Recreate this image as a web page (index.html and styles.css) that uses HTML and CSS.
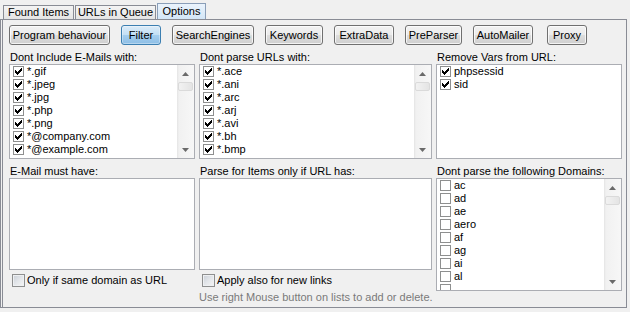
FILE: index.html
```html
<!DOCTYPE html>
<html>
<head>
<meta charset="utf-8">
<link rel="stylesheet" href="styles.css">
</head>
<body>
<div class="tabs">
  <div class="tab t-found">Found Items</div>
  <div class="tab t-urls">URLs in Queue</div>
  <div class="tab t-opt active">Options</div>
</div>
<div class="panel">
  <div class="btnrow">
    <div class="btn b-prog">Program behaviour</div>
    <div class="btn b-filter on">Filter</div>
    <div class="btn b-se">SearchEngines</div>
    <div class="btn b-kw">Keywords</div>
    <div class="btn b-ed">ExtraData</div>
    <div class="btn b-pp">PreParser</div>
    <div class="btn b-am">AutoMailer</div>
    <div class="btn b-px">Proxy</div>
  </div>

  <div class="grid top">
    <div class="group">
      <div class="lbl">Dont Include E-Mails with:</div>
      <div class="list">
        <div class="items">
          <div class="item"><span class="cb"><svg width="9" height="9" viewBox="0 0 9 9"><polygon class="ck" points="1,3 2,3 2,4 3,4 3,5 4,5 4,4 5,4 5,3 6,3 6,2 7,2 7,1 8,1 8,4 7,4 7,5 6,5 6,6 5,6 5,7 4,7 4,8 3,8 3,7 2,7 2,6 1,6"/></svg></span>*.gif</div>
          <div class="item"><span class="cb"><svg width="9" height="9" viewBox="0 0 9 9"><polygon class="ck" points="1,3 2,3 2,4 3,4 3,5 4,5 4,4 5,4 5,3 6,3 6,2 7,2 7,1 8,1 8,4 7,4 7,5 6,5 6,6 5,6 5,7 4,7 4,8 3,8 3,7 2,7 2,6 1,6"/></svg></span>*.jpeg</div>
          <div class="item"><span class="cb"><svg width="9" height="9" viewBox="0 0 9 9"><polygon class="ck" points="1,3 2,3 2,4 3,4 3,5 4,5 4,4 5,4 5,3 6,3 6,2 7,2 7,1 8,1 8,4 7,4 7,5 6,5 6,6 5,6 5,7 4,7 4,8 3,8 3,7 2,7 2,6 1,6"/></svg></span>*.jpg</div>
          <div class="item"><span class="cb"><svg width="9" height="9" viewBox="0 0 9 9"><polygon class="ck" points="1,3 2,3 2,4 3,4 3,5 4,5 4,4 5,4 5,3 6,3 6,2 7,2 7,1 8,1 8,4 7,4 7,5 6,5 6,6 5,6 5,7 4,7 4,8 3,8 3,7 2,7 2,6 1,6"/></svg></span>*.php</div>
          <div class="item"><span class="cb"><svg width="9" height="9" viewBox="0 0 9 9"><polygon class="ck" points="1,3 2,3 2,4 3,4 3,5 4,5 4,4 5,4 5,3 6,3 6,2 7,2 7,1 8,1 8,4 7,4 7,5 6,5 6,6 5,6 5,7 4,7 4,8 3,8 3,7 2,7 2,6 1,6"/></svg></span>*.png</div>
          <div class="item"><span class="cb"><svg width="9" height="9" viewBox="0 0 9 9"><polygon class="ck" points="1,3 2,3 2,4 3,4 3,5 4,5 4,4 5,4 5,3 6,3 6,2 7,2 7,1 8,1 8,4 7,4 7,5 6,5 6,6 5,6 5,7 4,7 4,8 3,8 3,7 2,7 2,6 1,6"/></svg></span>*@company.com</div>
          <div class="item"><span class="cb"><svg width="9" height="9" viewBox="0 0 9 9"><polygon class="ck" points="1,3 2,3 2,4 3,4 3,5 4,5 4,4 5,4 5,3 6,3 6,2 7,2 7,1 8,1 8,4 7,4 7,5 6,5 6,6 5,6 5,7 4,7 4,8 3,8 3,7 2,7 2,6 1,6"/></svg></span>*@example.com</div>
        </div>
        <div class="sb">
          <div class="sb-btn"><svg width="7" height="4" viewBox="0 0 7 4"><polygon class="arr" points="0,4 3.5,0 7,4"/></svg></div>
          <div class="thumb"></div>
          <div class="track"></div>
          <div class="sb-btn"><svg width="7" height="4" viewBox="0 0 7 4"><polygon class="arr" points="0,0 7,0 3.5,4"/></svg></div>
        </div>
      </div>
    </div>

    <div class="group">
      <div class="lbl">Dont parse URLs with:</div>
      <div class="list">
        <div class="items">
          <div class="item"><span class="cb"><svg width="9" height="9" viewBox="0 0 9 9"><polygon class="ck" points="1,3 2,3 2,4 3,4 3,5 4,5 4,4 5,4 5,3 6,3 6,2 7,2 7,1 8,1 8,4 7,4 7,5 6,5 6,6 5,6 5,7 4,7 4,8 3,8 3,7 2,7 2,6 1,6"/></svg></span>*.ace</div>
          <div class="item"><span class="cb"><svg width="9" height="9" viewBox="0 0 9 9"><polygon class="ck" points="1,3 2,3 2,4 3,4 3,5 4,5 4,4 5,4 5,3 6,3 6,2 7,2 7,1 8,1 8,4 7,4 7,5 6,5 6,6 5,6 5,7 4,7 4,8 3,8 3,7 2,7 2,6 1,6"/></svg></span>*.ani</div>
          <div class="item"><span class="cb"><svg width="9" height="9" viewBox="0 0 9 9"><polygon class="ck" points="1,3 2,3 2,4 3,4 3,5 4,5 4,4 5,4 5,3 6,3 6,2 7,2 7,1 8,1 8,4 7,4 7,5 6,5 6,6 5,6 5,7 4,7 4,8 3,8 3,7 2,7 2,6 1,6"/></svg></span>*.arc</div>
          <div class="item"><span class="cb"><svg width="9" height="9" viewBox="0 0 9 9"><polygon class="ck" points="1,3 2,3 2,4 3,4 3,5 4,5 4,4 5,4 5,3 6,3 6,2 7,2 7,1 8,1 8,4 7,4 7,5 6,5 6,6 5,6 5,7 4,7 4,8 3,8 3,7 2,7 2,6 1,6"/></svg></span>*.arj</div>
          <div class="item"><span class="cb"><svg width="9" height="9" viewBox="0 0 9 9"><polygon class="ck" points="1,3 2,3 2,4 3,4 3,5 4,5 4,4 5,4 5,3 6,3 6,2 7,2 7,1 8,1 8,4 7,4 7,5 6,5 6,6 5,6 5,7 4,7 4,8 3,8 3,7 2,7 2,6 1,6"/></svg></span>*.avi</div>
          <div class="item"><span class="cb"><svg width="9" height="9" viewBox="0 0 9 9"><polygon class="ck" points="1,3 2,3 2,4 3,4 3,5 4,5 4,4 5,4 5,3 6,3 6,2 7,2 7,1 8,1 8,4 7,4 7,5 6,5 6,6 5,6 5,7 4,7 4,8 3,8 3,7 2,7 2,6 1,6"/></svg></span>*.bh</div>
          <div class="item"><span class="cb"><svg width="9" height="9" viewBox="0 0 9 9"><polygon class="ck" points="1,3 2,3 2,4 3,4 3,5 4,5 4,4 5,4 5,3 6,3 6,2 7,2 7,1 8,1 8,4 7,4 7,5 6,5 6,6 5,6 5,7 4,7 4,8 3,8 3,7 2,7 2,6 1,6"/></svg></span>*.bmp</div>
        </div>
        <div class="sb">
          <div class="sb-btn"><svg width="7" height="4" viewBox="0 0 7 4"><polygon class="arr" points="0,4 3.5,0 7,4"/></svg></div>
          <div class="thumb"></div>
          <div class="track"></div>
          <div class="sb-btn"><svg width="7" height="4" viewBox="0 0 7 4"><polygon class="arr" points="0,0 7,0 3.5,4"/></svg></div>
        </div>
      </div>
    </div>

    <div class="group">
      <div class="lbl">Remove Vars from URL:</div>
      <div class="list">
        <div class="items">
          <div class="item"><span class="cb"><svg width="9" height="9" viewBox="0 0 9 9"><polygon class="ck" points="1,3 2,3 2,4 3,4 3,5 4,5 4,4 5,4 5,3 6,3 6,2 7,2 7,1 8,1 8,4 7,4 7,5 6,5 6,6 5,6 5,7 4,7 4,8 3,8 3,7 2,7 2,6 1,6"/></svg></span>phpsessid</div>
          <div class="item"><span class="cb"><svg width="9" height="9" viewBox="0 0 9 9"><polygon class="ck" points="1,3 2,3 2,4 3,4 3,5 4,5 4,4 5,4 5,3 6,3 6,2 7,2 7,1 8,1 8,4 7,4 7,5 6,5 6,6 5,6 5,7 4,7 4,8 3,8 3,7 2,7 2,6 1,6"/></svg></span>sid</div>
        </div>
      </div>
    </div>
  </div>

  <div class="grid bottom">
    <div class="group">
      <div class="lbl">E-Mail must have:</div>
      <div class="box"></div>
      <div class="chk"><span class="cb3d"></span>Only if same domain as URL</div>
    </div>
    <div class="group">
      <div class="lbl">Parse for Items only if URL has:</div>
      <div class="box"></div>
      <div class="chk"><span class="cb3d"></span>Apply also for new links</div>
      <div class="hint">Use right Mouse button on lists to add or delete.</div>
    </div>
    <div class="group">
      <div class="lbl">Dont parse the following Domains:</div>
      <div class="list tall">
        <div class="items">
          <div class="item"><span class="cb"></span>ac</div>
          <div class="item"><span class="cb"></span>ad</div>
          <div class="item"><span class="cb"></span>ae</div>
          <div class="item"><span class="cb"></span>aero</div>
          <div class="item"><span class="cb"></span>af</div>
          <div class="item"><span class="cb"></span>ag</div>
          <div class="item"><span class="cb"></span>ai</div>
          <div class="item"><span class="cb"></span>al</div>
          <div class="item"><span class="cb"></span></div>
        </div>
        <div class="sb">
          <div class="sb-btn"><svg width="7" height="4" viewBox="0 0 7 4"><polygon class="arr" points="0,4 3.5,0 7,4"/></svg></div>
          <div class="thumb"></div>
          <div class="track"></div>
          <div class="sb-btn"><svg width="7" height="4" viewBox="0 0 7 4"><polygon class="arr" points="0,0 7,0 3.5,4"/></svg></div>
        </div>
      </div>
    </div>
  </div>
</div>
</body>
</html>
```

FILE: styles.css
```css
html, body {
  margin: 0;
  padding: 0;
}
body {
  width: 630px;
  height: 312px;
  overflow: hidden;
  background: #f0f0f0;
  color: #000;
  font-family: "Liberation Sans", Arial, sans-serif;
  font-size: 11px;
  line-height: 13px;
}

/* tabs */
.tabs {
  display: flex;
  align-items: flex-end;
  height: 19px;
  padding-left: 3px;
  gap: 1px;
}
.tab {
  box-sizing: border-box;
  height: 14px;
  border: 1px solid #898c95;
  border-bottom: none;
  background: linear-gradient(#f4f4f4, #e4e4e4);
  text-align: center;
  line-height: 13px;
  white-space: nowrap;
}
.t-found { width: 71px; }
.t-urls { width: 81px; }
.t-opt { width: 49px; }
.tab.active {
  height: 16px;
  line-height: 15px;
  border-color: #8a9eb8;
  background: linear-gradient(#eaf3fc, #d3e6f7);
}

/* panel */
.panel {
  box-sizing: border-box;
  width: 627px;
  height: 289px;
  border: 1px solid #898c95;
  border-left: 3px double #898c95;
  padding: 5px 0 0 6px;
  background: #f0f0f0;
}

/* buttons */
.btnrow {
  display: flex;
  gap: 11px;
  height: 20px;
}
.btn {
  box-sizing: border-box;
  height: 20px;
  border: 1px solid #707070;
  border-radius: 3px;
  background: linear-gradient(#f3f3f3 0%, #ebebeb 48%, #dddddd 52%, #cfcfcf 100%);
  box-shadow: inset 0 0 0 1px rgba(255, 255, 255, 0.75);
  text-align: center;
  line-height: 18px;
  white-space: nowrap;
}
.btn.on {
  border-color: #3c7fb1;
  background: linear-gradient(#dcecf9 0%, #c3dff4 48%, #a3cdee 52%, #8ebfe6 100%);
  box-shadow: inset 0 0 0 1px rgba(255, 255, 255, 0.35);
}
.b-prog { width: 101px; }
.b-filter { width: 40px; }
.b-se { width: 82px; }
.b-kw { width: 58px; }
.b-ed { width: 60px; }
.b-pp { width: 57px; }
.b-am { width: 60px; }
.b-px { width: 40px; margin-left: 3px; }

/* grids */
.grid {
  display: grid;
  grid-template-columns: 186px 233px 186px;
  column-gap: 4px;
}
.grid.top { margin-top: 6px; }
.grid.bottom { margin-top: 6px; }

.group {
  display: flex;
  flex-direction: column;
}
.lbl {
  height: 13px;
  line-height: 13px;
  padding-left: 1px;
  white-space: nowrap;
}

.list {
  box-sizing: border-box;
  height: 95px;
  border: 1px solid #abadb3;
  background: #fff;
  display: flex;
  overflow: hidden;
}
.list.tall { height: 113px; }
.items {
  flex: 1;
  overflow: hidden;
}
.item {
  display: flex;
  align-items: center;
  height: 13px;
  padding-left: 3px;
  white-space: nowrap;
}
.cb {
  box-sizing: border-box;
  flex: none;
  width: 11px;
  height: 11px;
  border: 1px solid #8e8f8f;
  background: #fff;
  margin-right: 3px;
}
.cb svg {
  display: block;
}
.ck {
  fill: #000;
  shape-rendering: crispEdges;
}

/* scrollbar */
.sb {
  flex: none;
  width: 17px;
  display: flex;
  flex-direction: column;
  background: linear-gradient(to right, #e4e4e4 0, #f1f1f1 2px, #f7f7f7 100%);
}
.sb-btn {
  height: 17px;
  display: flex;
  align-items: center;
  justify-content: center;
}
.sb-btn svg { display: block; }
.arr { fill: #6a6a6a; }
.thumb {
  box-sizing: border-box;
  height: 9px;
  margin: 0 1px;
  border: 1px solid #dadada;
  border-radius: 2px;
  background: linear-gradient(to right, #f2f2f2, #e4e4e4);
}
.track { flex: 1; }

/* bottom section */
.box {
  box-sizing: border-box;
  height: 92px;
  border: 1px solid #abadb3;
  background: #fff;
}
.chk {
  display: flex;
  align-items: center;
  height: 13px;
  margin-top: 4px;
  padding-left: 3px;
  white-space: nowrap;
}
.cb3d {
  box-sizing: border-box;
  flex: none;
  width: 13px;
  height: 13px;
  margin-right: 2px;
  border: 1px solid #8e8f8f;
  background: linear-gradient(135deg, #c9ced6 0%, #e3e6ea 50%, #f6f6f6 100%);
  box-shadow: inset 0 0 0 1px #eef0f2;
}
.hint {
  margin-top: 4px;
  height: 13px;
  color: #7a7a7a;
  white-space: nowrap;
}
```
